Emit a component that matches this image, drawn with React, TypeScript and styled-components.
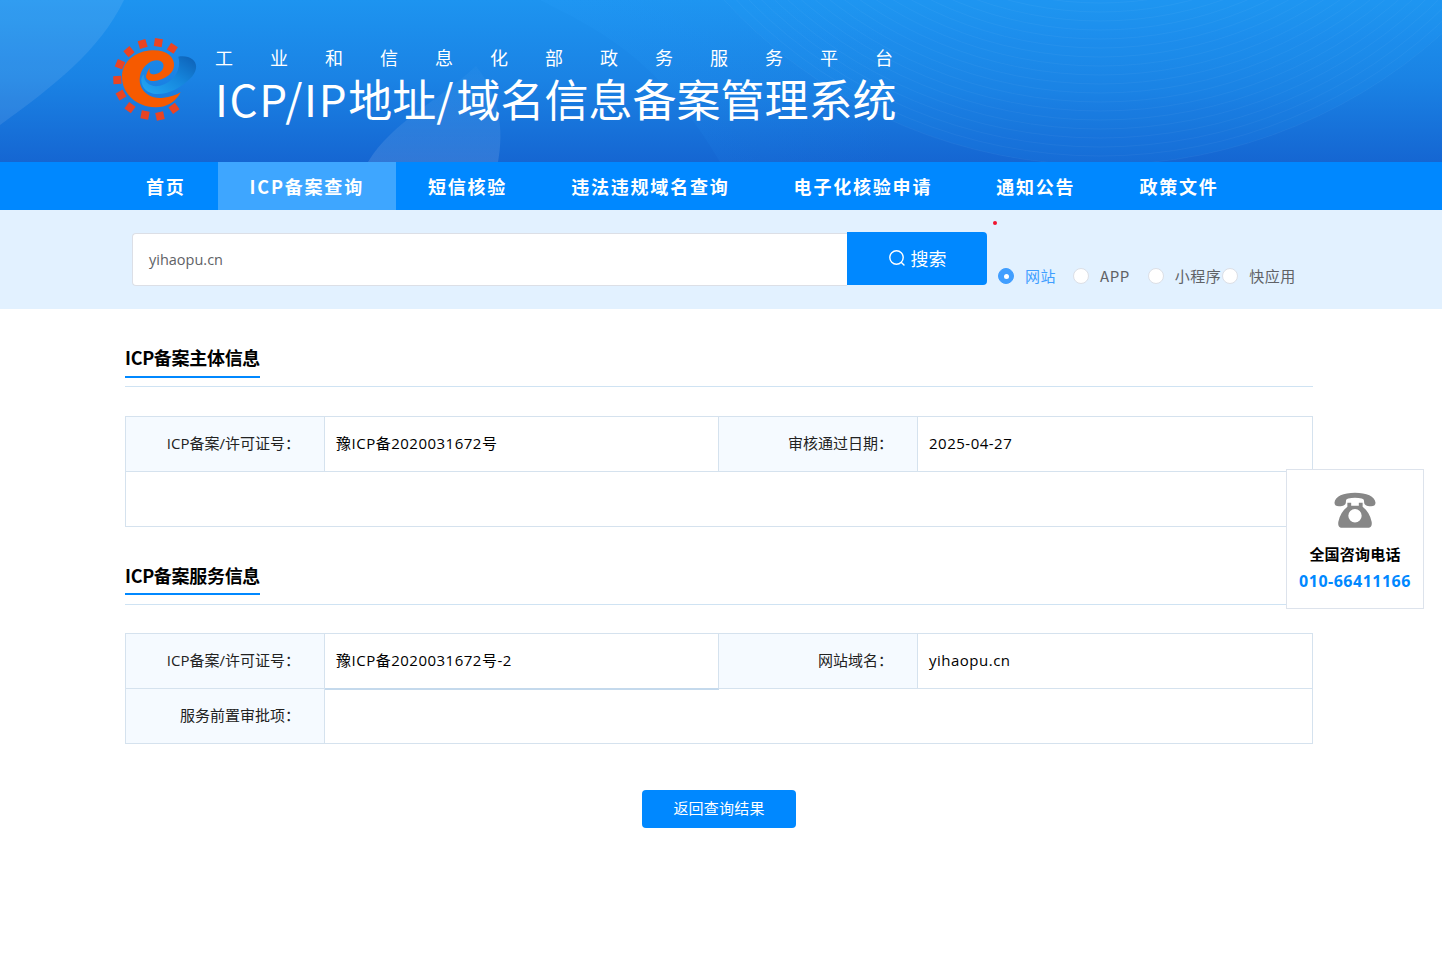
import React from 'react'
import styled, { createGlobalStyle } from 'styled-components'

const GlobalStyle = createGlobalStyle`
  html, body {
    margin: 0;
    padding: 0;
    background: #fff;
    font-family: "Noto Sans CJK SC", "Noto Sans", sans-serif;
    color: #000;
  }
  * {
    box-sizing: border-box;
  }
`

const Page = styled.div`
  width: 100%;
  min-height: 972px;
  overflow: hidden;
  background: #fff;
`
const Banner = styled.header`
  position: relative;
  height: 162px;
  overflow: hidden;
  background: linear-gradient(180deg, #1d94f0 0%, #1a82e4 50%, #1566d2 100%);
`
const BannerArt = styled.svg`
  position: absolute;
  left: 0;
  top: 0;
  width: 1442px;
  height: 162px;
`
const BannerInner = styled.div`
  position: relative;
  display: flex;
  align-items: flex-start;
  gap: 17px;
  padding: 38px 0 0 112px;
`
const TitleBlock = styled.div`
  display: flex;
  flex-direction: column;
  color: #fff;
  padding-top: 7px;
`
const SubTitle = styled.div`
  font-size: 18px;
  line-height: 24px;
  letter-spacing: 37px;
  white-space: nowrap;
  font-weight: 400;
`
const MainTitle = styled.div`
  font-size: 44px;
  line-height: 58px;
  white-space: nowrap;
  font-weight: 400;
`
const LatinRun = styled.span<{ $spacing: number }>`
  letter-spacing: ${({ $spacing }) => $spacing}px;
`
const Nav = styled.nav`
  display: flex;
  height: 48px;
  padding-left: 114px;
  background: #0088ff;
`
const NavItem = styled.a<{ $active?: boolean }>`
  display: flex;
  align-items: center;
  padding: 0 32px;
  font-size: 18px;
  font-weight: 700;
  letter-spacing: 1.8px;
  color: #fff;
  white-space: nowrap;
  background: ${({ $active }) => ($active ? '#3ea6ff' : 'transparent')};
`
const SearchBar = styled.section`
  position: relative;
  display: flex;
  height: 99px;
  padding: 22px 0 0 132px;
  background: #e2f1ff;
`
const SearchInput = styled.div`
  width: 715px;
  height: 53px;
  margin-top: 1px;
  display: flex;
  align-items: center;
  padding: 0 0 1px 16px;
  font-family: "Open Sans", "Noto Sans CJK SC", sans-serif;
  font-size: 14.5px;
  color: #606266;
  background: #fff;
  border: 1px solid #dcdfe6;
  border-right: none;
  border-radius: 4px 0 0 4px;
`
const SearchButton = styled.button`
  width: 140px;
  height: 53px;
  display: flex;
  align-items: center;
  justify-content: center;
  gap: 5px;
  padding: 0 0 2px;
  border: none;
  border-radius: 0 4px 4px 0;
  background: #0088ff;
  color: #fff;
  font-family: inherit;
  font-size: 18px;
`
const RedDot = styled.span`
  position: absolute;
  left: 993px;
  top: 11px;
  width: 4px;
  height: 4px;
  border-radius: 50%;
  background: #f0142f;
`
const RadioGroup = styled.div`
  display: flex;
  align-items: center;
  height: 24px;
  margin: 32px 0 0 11px;
`
const RadioItem = styled.label<{ $gap: number; $checked?: boolean }>`
  display: flex;
  align-items: center;
  margin-right: ${({ $gap }) => $gap}px;
  font-size: 15px;
  letter-spacing: 0.5px;
  line-height: 20px;
  color: ${({ $checked }) => ($checked ? '#409eff' : '#606266')};
  white-space: nowrap;
`
const RadioDot = styled.span<{ $checked?: boolean }>`
  width: 16px;
  height: 16px;
  margin-right: 11px;
  border-radius: 50%;
  background: ${({ $checked }) => ($checked ? '#409eff' : '#fff')};
  border: 1px solid ${({ $checked }) => ($checked ? '#409eff' : '#dcdfe6')};
  display: flex;
  align-items: center;
  justify-content: center;
  &::after {
    content: '';
    width: 5px;
    height: 5px;
    border-radius: 50%;
    background: #fff;
    display: ${({ $checked }) => ($checked ? 'block' : 'none')};
  }
`
const Content = styled.main`
  width: 1188px;
  margin-left: 125px;
`
const SectionHead = styled.div`
  height: 78px;
  border-bottom: 1px solid #cfe3f3;
`
const SectionTitle = styled.h2<{ $height: number }>`
  display: inline-block;
  height: ${({ $height }) => $height}px;
  margin: 0;
  padding-top: 32px;
  font-size: 18px;
  line-height: 32px;
  font-weight: 700;
  letter-spacing: -0.3px;
  color: #000;
  border-bottom: 2px solid #0088ff;
`
const InfoTable = styled.div<{ $top: number }>`
  display: grid;
  grid-template-columns: 199px 394px 199px 395px;
  grid-auto-rows: 55px;
  margin-top: ${({ $top }) => $top}px;
  border: 1px solid #d5e2ee;
  border-bottom: none;
  border-right: none;
  font-family: "Open Sans", "Noto Sans CJK SC", sans-serif;
  font-size: 15px;
`
const Label = styled.div`
  display: flex;
  align-items: center;
  justify-content: flex-end;
  padding: 0 24px 3px 0;
  color: #222;
  background: #f5faff;
  border-right: 1px solid #d5e2ee;
  border-bottom: 1px solid #d5e2ee;
`
const Value = styled.div<{ $span?: number; $thick?: boolean }>`
  position: relative;
  z-index: ${({ $thick }) => ($thick ? 1 : 0)};
  display: flex;
  align-items: center;
  padding: 0 0 3px 11px;
  letter-spacing: 0.5px;
  color: #000;
  background: #fff;
  grid-column: span ${({ $span }) => $span ?? 1};
  border-right: 1px solid #d5e2ee;
  border-bottom: 1px solid ${({ $thick }) => ($thick ? '#c4d9ec' : '#d5e2ee')};
  box-shadow: ${({ $thick }) => ($thick ? '0 1px 0 #c4d9ec' : 'none')};
`
const BackRow = styled.div`
  display: flex;
  justify-content: center;
  margin-top: 46px;
`
const BackButton = styled.button`
  width: 154px;
  height: 38px;
  padding: 0 0 3px;
  border: none;
  border-radius: 4px;
  background: #0088ff;
  color: #fff;
  font-family: inherit;
  font-size: 15px;
  letter-spacing: 0.2px;
`
const PhoneCard = styled.aside`
  position: fixed;
  left: 1286px;
  top: 469px;
  width: 138px;
  height: 140px;
  display: flex;
  flex-direction: column;
  align-items: center;
  padding-top: 22px;
  background: #fff;
  border: 1px solid #dde3ec;
`
const PhoneLabel = styled.div`
  margin-top: 14px;
  font-size: 15px;
  line-height: 22px;
  font-weight: 700;
  letter-spacing: 0.2px;
  color: #000;
`
const PhoneNumber = styled.div`
  margin-top: 5px;
  font-size: 16px;
  line-height: 22px;
  font-weight: 700;
  letter-spacing: 0.5px;
  color: #0088ff;
  font-family: "Open Sans", "Noto Sans", sans-serif;
`

// tooth centres and turn, in the 270px space of the logo drawing
const teeth = [
  [98, 27, -17],
  [145, 23, 9],
  [187, 40, 33],
  [57, 50, -40],
  [30, 88, -67],
  [22, 135, -92],
  [33, 180, -119],
  [60, 218, -143],
  [105, 240, -169],
  [150, 243, 168],
  [192, 220, 144]
]

function Logo() {
  return (
    <svg width="86" height="84" viewBox="0 0 86 84">
      <defs>
        <linearGradient id="swoosh" x1="0" y1="1" x2="1" y2="0">
          <stop offset="0" stopColor="#23a9f5" />
          <stop offset="0.55" stopColor="#1585dc" />
          <stop offset="1" stopColor="#0d5fb5" />
        </linearGradient>
      </defs>
      <g transform="translate(-2 -3) scale(0.3333)">
        {teeth.map(([x, y, a]) => (
          <rect key={a} x={x - 12} y={y - 12} width="24" height="24" fill="#ea4423" transform={`rotate(${a} ${x} ${y})`} />
        ))}
        <path
          d="M205 65C250 58 275 90 246 125C212 162 165 182 130 176C95 170 85 130 102 118C100 145 125 158 150 152C195 140 215 100 205 65Z"
          fill="url(#swoosh)"
        />
        <path
          d="M212 172C195 205 165 218 135 217C78 214 36 175 36 125C36 78 80 48 125 46C172 44 194 68 192 92C190 122 150 139 125 138C115 137 108 132 108 124C110 113 114 106 120 98C117 110 119 116 128 118C146 120 164 104 160 88C156 74 132 72 116 84C92 100 84 130 92 152C102 178 130 192 160 188C180 186 198 181 212 172Z"
          fill="#f65a00"
        />
      </g>
    </svg>
  )
}

function PhoneIcon() {
  return (
    <svg width="42" height="37" viewBox="0 0 44 38" fill="#878787">
      <path d="M0.5 11C1 4 10 0.5 22 0.5C34 0.5 43 4 43.5 11C43.5 14 41 15 37 14.5C33 14 31.5 12.5 31.5 9.5C31.5 8 31 7 29 6.5C25 5.5 19 5.5 15 6.5C13 7 12.5 8 12.5 9.5C12.5 12.5 11 14 7 14.5C3 15 0.5 14 0.5 11Z" />
      <path
        fillRule="evenodd"
        d="M14 11H18V14H26V11H30V15C35 19 38 24 39.5 31C40 35 38.5 37 36 37H8C5.5 37 4 35 4.5 31C6 24 9 19 14 15ZM22 17.5A7 7 0 1 0 22 31.5A7 7 0 1 0 22 17.5Z"
      />
    </svg>
  )
}

function SearchIcon() {
  return (
    <svg width="18" height="18" viewBox="0 0 18 18" fill="none" stroke="#fff" strokeWidth="1.4" strokeLinecap="round">
      <circle cx="8.5" cy="8.5" r="6.7" />
      <path d="M13.4 13.4L16 16" />
    </svg>
  )
}

const navItems = ['首页', 'ICP备案查询', '短信核验', '违法违规域名查询', '电子化核验申请', '通知公告', '政策文件']
const radios = [
  { name: '网站', gap: 17, checked: true },
  { name: 'APP', gap: 18 },
  { name: '小程序', gap: 1 },
  { name: '快应用', gap: 0 }
]

export default function App() {
  return (
    <Page>
      <GlobalStyle />
      <Banner>
        <BannerArt viewBox="0 0 1442 162">
          <defs>
            <linearGradient id="fold" x1="0" y1="0" x2="0" y2="1">
              <stop offset="0" stopColor="#fff" stopOpacity="0.02" />
              <stop offset="1" stopColor="#fff" stopOpacity="0.12" />
            </linearGradient>
            <linearGradient id="band" x1="540" y1="0" x2="900" y2="0" gradientUnits="userSpaceOnUse">
              <stop offset="0" stopColor="#2aa2ff" stopOpacity="0.14" />
              <stop offset="1" stopColor="#2aa2ff" stopOpacity="0" />
            </linearGradient>
          </defs>
          <path d="M0 0H124C100 50 55 85 0 125Z" fill="#fff" fillOpacity="0.09" />
          <path d="M540 0C600 30 660 60 720 162H900V0Z" fill="url(#band)" />
          <circle cx="1100" cy="-346" r="511" fill="#2aa2ff" fillOpacity="0.1" />
          <path d="M368 162C392 122 440 100 476 66C500 96 504 130 498 162Z" fill="url(#fold)" />
          <g fill="none" stroke="#fff" strokeOpacity="0.04">
            {Array.from({ length: 26 }, (_, i) => (
              <circle key={i} cx="1100" cy="-346" r={511 - i * 9} />
            ))}
          </g>
        </BannerArt>
        <BannerInner>
          <Logo />
          <TitleBlock>
            <SubTitle>工业和信息化部政务服务平台</SubTitle>
            <MainTitle>
              <LatinRun $spacing={1.7}>ICP/IP</LatinRun>地址<LatinRun $spacing={3}>/</LatinRun>域名信息备案管理系统
            </MainTitle>
          </TitleBlock>
        </BannerInner>
      </Banner>
      <Nav>
        {navItems.map((item, i) => (
          <NavItem key={item} $active={i === 1}>
            {item}
          </NavItem>
        ))}
      </Nav>
      <SearchBar>
        <SearchInput>yihaopu.cn</SearchInput>
        <SearchButton>
          <SearchIcon />
          搜索
        </SearchButton>
        <RedDot />
        <RadioGroup>
          {radios.map(r => (
            <RadioItem key={r.name} $gap={r.gap} $checked={r.checked}>
              <RadioDot $checked={r.checked} />
              {r.name}
            </RadioItem>
          ))}
        </RadioGroup>
      </SearchBar>
      <Content>
        <SectionHead>
          <SectionTitle $height={69}>ICP备案主体信息</SectionTitle>
        </SectionHead>
        <InfoTable $top={29}>
          <Label>ICP备案/许可证号：</Label>
          <Value>豫ICP备2020031672号</Value>
          <Label>审核通过日期：</Label>
          <Value>2025-04-27</Value>
          <Value $span={4} />
        </InfoTable>
        <SectionHead>
          <SectionTitle $height={68}>ICP备案服务信息</SectionTitle>
        </SectionHead>
        <InfoTable $top={28}>
          <Label>ICP备案/许可证号：</Label>
          <Value $thick>豫ICP备2020031672号-2</Value>
          <Label>网站域名：</Label>
          <Value>yihaopu.cn</Value>
          <Label>服务前置审批项：</Label>
          <Value $span={3} />
        </InfoTable>
        <BackRow>
          <BackButton>返回查询结果</BackButton>
        </BackRow>
      </Content>
      <PhoneCard>
        <PhoneIcon />
        <PhoneLabel>全国咨询电话</PhoneLabel>
        <PhoneNumber>010-66411166</PhoneNumber>
      </PhoneCard>
    </Page>
  )
}
